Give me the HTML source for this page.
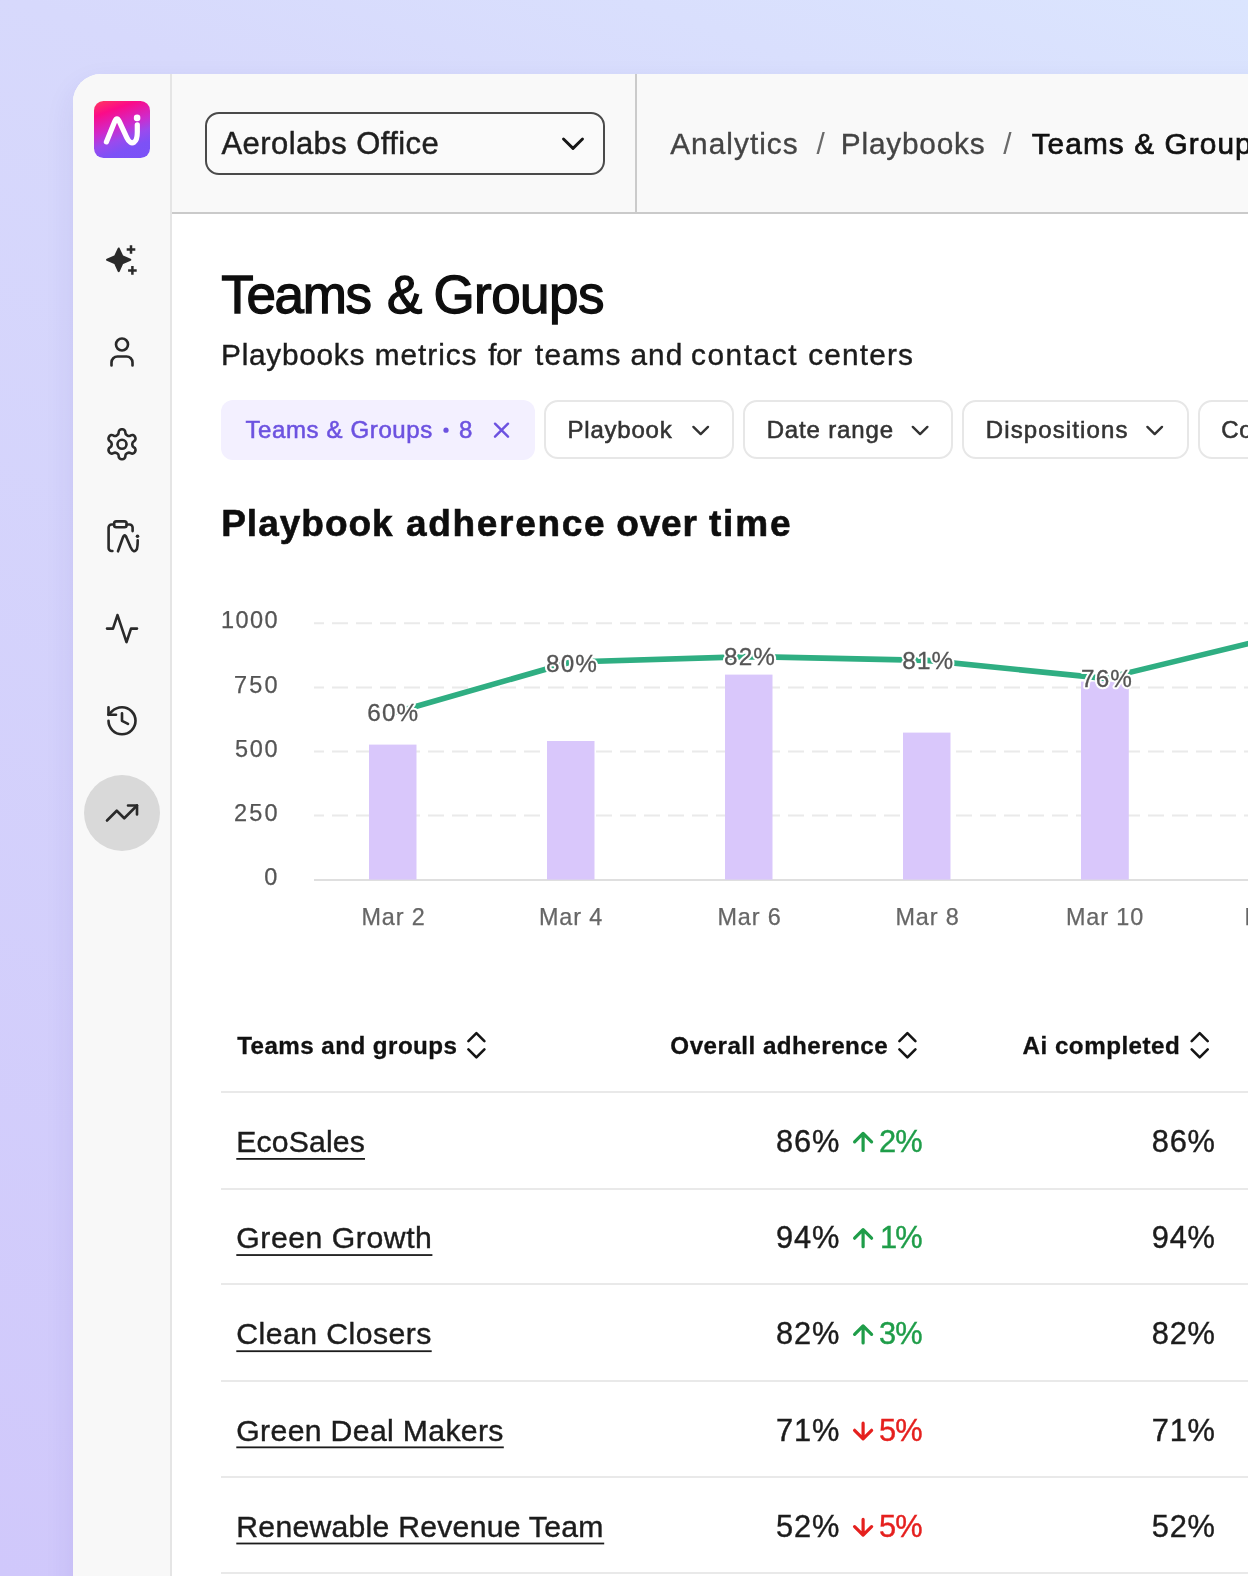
<!DOCTYPE html>
<html lang="en">
<head>
<meta charset="utf-8">
<title>Teams &amp; Groups</title>
<style>
html,body{margin:0;padding:0}
body{width:1248px;height:1576px;overflow:hidden;position:relative;font-family:"Liberation Sans",sans-serif;
  background:linear-gradient(200deg,#dbe5fe 0%,#d7d9fc 22%,#d0c8fb 100%);}
#root{position:absolute;left:0;top:0;width:1248px;height:1576px;overflow:hidden}
.abs{position:absolute}
#win{left:73px;top:74px;width:1300px;height:1600px;background:#fff;border-top-left-radius:28px;box-shadow:0 12px 30px rgba(60,40,160,.09)}
#side{left:73px;top:74px;width:97px;height:1600px;background:#f8f8f8;border-top-left-radius:28px;border-right:2px solid #e5e5e5}
#head{left:172px;top:74px;width:1200px;height:138px;background:#f9f9f9;border-bottom:2px solid #cacaca}
#vdiv{left:635px;top:74px;width:2px;height:138px;background:#cbcbcb}
#logo{left:94px;top:101px;width:56px;height:57px;border-radius:9.5px;background:linear-gradient(160deg,#ff3a5e 0%,#fb0b88 20%,#cf2acb 45%,#9a4aee 62%,#7d51f6 78%,#7a52f7 100%)}
#dd{left:205px;top:112px;width:396px;height:59px;border:2px solid #4a4a4a;border-radius:14px;background:#fafafa}
.t{position:absolute;white-space:nowrap;display:block}
.lnk{text-decoration:underline;text-decoration-thickness:2px;text-underline-offset:5px;text-decoration-skip-ink:none}
.chip{position:absolute;box-sizing:border-box;top:400px;height:59px;border:2px solid #e7e7e7;border-radius:14px;background:#fff}
#chip0{left:221px;top:400px;width:314px;height:60px;border-radius:12px;background:#f3f0ff}
.hr{position:absolute;left:221px;width:1100px;height:2px;background:#e9e9e9}
#act{left:84px;top:775px;width:76px;height:76px;border-radius:50%;background:#d9d9d9}
svg{position:absolute;left:0;top:0;overflow:visible}
</style>
</head>
<body>
<div id="root">
<div id="win" class="abs"></div>
<div id="side" class="abs"></div>
<div id="head" class="abs"></div>
<div id="vdiv" class="abs"></div>
<div id="logo" class="abs"></div>
<div id="dd" class="abs"></div>
<div id="act" class="abs"></div>
<div id="chip0" class="abs"></div>
<div class="chip" style="left:544px;width:190px"></div>
<div class="chip" style="left:743px;width:210px"></div>
<div class="chip" style="left:962px;width:227px"></div>
<div class="chip" style="left:1198px;width:200px"></div>
<div class="hr" style="top:1091px"></div>
<div class="hr" style="top:1188px"></div>
<div class="hr" style="top:1283px"></div>
<div class="hr" style="top:1380px"></div>
<div class="hr" style="top:1476px"></div>
<div class="hr" style="top:1572px"></div>

<!-- chart -->
<svg width="1248" height="1576" viewBox="0 0 1248 1576" style="will-change:transform">
  <g stroke="#eaeaea" stroke-width="2" stroke-dasharray="16 8" stroke-dashoffset="6" fill="none">
    <path d="M314 623.3H1248"/><path d="M314 687.4H1248"/><path d="M314 751.5H1248"/><path d="M314 815.6H1248"/>
  </g>
  <path d="M314 880H1248" stroke="#dfdfdf" stroke-width="2"/>
  <g fill="#d9c7fb">
    <rect x="369" y="744.6" width="47.5" height="135"/>
    <rect x="547" y="741" width="47.5" height="138.6"/>
    <rect x="725" y="674.6" width="47.5" height="205"/>
    <rect x="903" y="732.6" width="47.5" height="147"/>
    <rect x="1081" y="681.6" width="47.8" height="198"/>
  </g>
  <polyline points="393,713 571,662 749,656.6 927,660.4 1105,678.4 1283,635.3" fill="none" stroke="#2fae82" stroke-width="5.6" stroke-linejoin="round" stroke-linecap="round"/>
  <g font-family="Liberation Sans, sans-serif" font-size="24.3" text-anchor="middle" letter-spacing="1.1">
  <g fill="#fff" stroke="#fff" stroke-width="4.3" stroke-linejoin="round">
    <text x="393.3" y="720.6">60%</text>
    <text x="572" y="672.3">80%</text>
    <text x="750" y="664.8">82%</text>
    <text x="928.3" y="668.7">81%</text>
    <text x="1107" y="686.5">76%</text>
  </g>
  <g fill="#555" stroke="#555" stroke-width="0.3">
    <text x="393.3" y="720.6">60%</text>
    <text x="572" y="672.3">80%</text>
    <text x="750" y="664.8">82%</text>
    <text x="928.3" y="668.7">81%</text>
    <text x="1107" y="686.5">76%</text>
  </g>
  </g>
</svg>

<!-- icons -->
<svg width="1248" height="1576" viewBox="0 0 1248 1576" fill="none" stroke="#2a2a2a" stroke-width="1.75" stroke-linecap="round" stroke-linejoin="round">
  <!-- logo glyph -->
  <g stroke="#fff" stroke-width="5.2">
    <path d="M106.4 141.9 L114.7 121.6 Q116.9 116 119.4 121.6 L126.8 137.6 Q130.2 144.8 134.3 142 Q137.3 139.8 137.3 132 L137.3 124.8" />
  </g>
  <circle cx="137.1" cy="117.9" r="3.3" fill="#fff" stroke="none"/>
  <!-- dropdown chevron -->
  <path d="M563.5 139 L573 148.4 L582.5 139" stroke="#161616" stroke-width="2.9"/>
  <!-- sparkles -->
  <g fill="#2a2a2a" stroke="#2a2a2a" stroke-width="2.2" stroke-linejoin="round">
    <path d="M118.7 248.6 L122.2 256.3 L130.2 259.8 L122.2 263.3 L118.7 271.0 L115.2 263.3 L107.2 259.8 L115.2 256.3Z"/>
  </g>
  <g stroke-width="2.5" stroke-linecap="butt">
    <path d="M131 245.2v8.6M126.7 249.5h8.6"/>
    <path d="M132.4 266.1v8.6M128.1 270.4h8.6"/>
  </g>
  <!-- user -->
  <g transform="translate(104 334) scale(1.5)"><path d="M19 21v-2a4 4 0 0 0-4-4H9a4 4 0 0 0-4 4v2"/><circle cx="12" cy="7" r="4"/></g>
  <!-- settings -->
  <g transform="translate(104 426.3) scale(1.5)"><path d="M12.22 2h-.44a2 2 0 0 0-2 2v.18a2 2 0 0 1-1 1.73l-.43.25a2 2 0 0 1-2 0l-.15-.08a2 2 0 0 0-2.73.73l-.22.38a2 2 0 0 0 .73 2.73l.15.1a2 2 0 0 1 1 1.72v.51a2 2 0 0 1-1 1.74l-.15.09a2 2 0 0 0-.73 2.73l.22.38a2 2 0 0 0 2.73.73l.15-.08a2 2 0 0 1 2 0l.43.25a2 2 0 0 1 1 1.73V20a2 2 0 0 0 2 2h.44a2 2 0 0 0 2-2v-.18a2 2 0 0 1 1-1.73l.43-.25a2 2 0 0 1 2 0l.15.08a2 2 0 0 0 2.73-.73l.22-.39a2 2 0 0 0-.73-2.73l-.15-.08a2 2 0 0 1-1-1.74v-.5a2 2 0 0 1 1-1.74l.15-.09a2 2 0 0 0 .73-2.73l-.22-.38a2 2 0 0 0-2.73-.73l-.15.08a2 2 0 0 1-2 0l-.43-.25a2 2 0 0 1-1-1.73V4a2 2 0 0 0-2-2z"/><circle cx="12" cy="12" r="3"/></g>
  <!-- clipboard ai -->
  <g stroke-width="2.6">
    <rect x="114.1" y="521.4" width="12.5" height="5.8" rx="2.2"/>
    <path d="M114 524.5h-2.4a3 3 0 0 0-3 3v20.5a3 3 0 0 0 3 3h.8"/>
    <path d="M126.7 524.5h2.9a3 3 0 0 1 3 3v3.6"/>
    <path d="M118 551.3 L122.6 538.3 Q124.7 532.5 126.8 538.3 L130.6 547.3 Q133.6 553.8 136.6 549.5 Q137.7 547.5 137.7 540.3"/>
  </g>
  <circle cx="137.5" cy="536.2" r="1.8" fill="#2a2a2a" stroke="none"/>
  <!-- activity -->
  <g transform="translate(104 610.6) scale(1.5)"><polyline points="22 12 18 12 15 21 9 3 6 12 2 12"/></g>
  <!-- history -->
  <g transform="translate(104 702.8) scale(1.5)"><path d="M3 12a9 9 0 1 0 9-9 9.75 9.75 0 0 0-6.74 2.74L3 8"/><path d="M3 3v5h5"/><path d="M12 7v5l4 2"/></g>
  <!-- trending -->
  <g transform="translate(104 795) scale(1.5)"><polyline points="22 7 13.5 15.5 8.5 10.5 2 17"/><polyline points="16 7 22 7 22 13"/></g>

  <!-- chip icons -->
  <g stroke="#6c52e0" stroke-width="2.4"><path d="M495 423.7l13 13M508 423.7l-13 13"/></g>
  <circle cx="446" cy="430.2" r="2.6" fill="#6c52e0" stroke="none"/>
  <g stroke="#333" stroke-width="2.4">
    <path d="M693.4 426.9l7.3 7.2 7.3-7.2"/>
    <path d="M912.8 426.9l7.3 7.2 7.3-7.2"/>
    <path d="M1147.4 426.9l7.3 7.2 7.3-7.2"/>
  </g>
  <!-- sort icons -->
  <g stroke="#151515" stroke-width="2.6">
    <path d="M468.4 1041.2L476.4 1033.2L484.4 1041.2M468.4 1049.3L476.4 1057.3L484.4 1049.3"/>
    <path d="M899.4 1041.2L907.4 1033.2L915.4 1041.2M899.4 1049.3L907.4 1057.3L915.4 1049.3"/>
    <path d="M1191.7 1041.2L1199.7 1033.2L1207.7 1041.2M1191.7 1049.3L1199.7 1057.3L1207.7 1049.3"/>
  </g>
  <!-- arrows -->
  <g stroke-width="3.2">
    <rect x="236.3" y="1158.00" width="128.7" height="1.8" fill="#1c1c1c" stroke="none"/>
    <path stroke="#1f9d49" d="M863.1 1150.4V1133.4M854.6 1141.9L863.1 1133.4L871.6 1141.9"/>
    <rect x="236.3" y="1254.15" width="196.1" height="1.8" fill="#1c1c1c" stroke="none"/>
    <path stroke="#1f9d49" d="M863.1 1246.7V1229.7M854.6 1238.2L863.1 1229.7L871.6 1238.2"/>
    <rect x="236.3" y="1350.30" width="195.4" height="1.8" fill="#1c1c1c" stroke="none"/>
    <path stroke="#1f9d49" d="M863.1 1342.9V1325.9M854.6 1334.4L863.1 1325.9L871.6 1334.4"/>
    <rect x="236.3" y="1446.45" width="267.5" height="1.8" fill="#1c1c1c" stroke="none"/>
    <path stroke="#e5201e" d="M863.1 1423.2V1438.8M854.6 1430.3L863.1 1438.8L871.6 1430.3"/>
    <rect x="236.3" y="1542.60" width="367.9" height="1.8" fill="#1c1c1c" stroke="none"/>
    <path stroke="#e5201e" d="M863.1 1519.4V1535.1M854.6 1526.6L863.1 1535.1L871.6 1526.6"/>
  </g>
</svg>

<div id="txt" style="position:absolute;left:0;top:0;width:1248px;height:1576px;will-change:transform">
<span class="t" style="left:221.53px;top:128px;font-size:31px;line-height:31px;color:#1f1f1f;letter-spacing:0.416px;-webkit-text-stroke:0.45px #1f1f1f">Aerolabs Office</span>
<span class="t" style="left:670.17px;top:129px;font-size:29.8px;line-height:29.8px;color:#444;letter-spacing:1.040px;-webkit-text-stroke:0.35px #444">Analytics</span>
<span class="t" style="left:816.50px;top:129px;font-size:29.8px;line-height:29.8px;color:#6a6a6a;letter-spacing:0.000px">/</span>
<span class="t" style="left:840.77px;top:129px;font-size:29.8px;line-height:29.8px;color:#444;letter-spacing:0.809px;-webkit-text-stroke:0.35px #444">Playbooks</span>
<span class="t" style="left:1003.30px;top:129px;font-size:29.8px;line-height:29.8px;color:#6a6a6a;letter-spacing:0.000px">/</span>
<span class="t" style="left:1031.65px;top:129px;font-size:29.8px;line-height:29.8px;color:#111;letter-spacing:1.085px;-webkit-text-stroke:0.7px #111">Teams &amp; Groups</span>
<span class="t" style="left:221.35px;top:268px;font-size:53px;line-height:53px;color:#0e0e0e;letter-spacing:-1.350px;-webkit-text-stroke:1.3px #0e0e0e">Teams</span>
<span class="t" style="left:386.95px;top:268px;font-size:53px;line-height:53px;color:#0e0e0e;letter-spacing:0.000px;-webkit-text-stroke:1.3px #0e0e0e">&amp;</span>
<span class="t" style="left:433.45px;top:268px;font-size:53px;line-height:53px;color:#0e0e0e;letter-spacing:-0.561px;-webkit-text-stroke:1.3px #0e0e0e">Groups</span>
<span class="t" style="left:221.10px;top:340px;font-size:29.8px;line-height:29.8px;color:#1c1c1c;letter-spacing:0.715px;-webkit-text-stroke:0.4px #1c1c1c">Playbooks</span>
<span class="t" style="left:374.80px;top:340px;font-size:29.8px;line-height:29.8px;color:#1c1c1c;letter-spacing:0.948px;-webkit-text-stroke:0.4px #1c1c1c">metrics</span>
<span class="t" style="left:488.20px;top:340px;font-size:29.8px;line-height:29.8px;color:#1c1c1c;letter-spacing:-0.475px;-webkit-text-stroke:0.4px #1c1c1c">for</span>
<span class="t" style="left:535.10px;top:340px;font-size:29.8px;line-height:29.8px;color:#1c1c1c;letter-spacing:1.039px;-webkit-text-stroke:0.4px #1c1c1c">teams</span>
<span class="t" style="left:630.40px;top:340px;font-size:29.8px;line-height:29.8px;color:#1c1c1c;letter-spacing:1.128px;-webkit-text-stroke:0.4px #1c1c1c">and</span>
<span class="t" style="left:691.00px;top:340px;font-size:29.8px;line-height:29.8px;color:#1c1c1c;letter-spacing:1.568px;-webkit-text-stroke:0.4px #1c1c1c">contact</span>
<span class="t" style="left:808.20px;top:340px;font-size:29.8px;line-height:29.8px;color:#1c1c1c;letter-spacing:1.181px;-webkit-text-stroke:0.4px #1c1c1c">centers</span>
<span class="t" style="left:245.38px;top:418px;font-size:24px;line-height:24px;color:#6c52e0;letter-spacing:0.632px;-webkit-text-stroke:0.55px #6c52e0">Teams &amp; Groups</span>
<span class="t" style="left:459.07px;top:418px;font-size:24px;line-height:24px;color:#6c52e0;letter-spacing:0.000px;-webkit-text-stroke:0.55px #6c52e0">8</span>
<span class="t" style="left:567.57px;top:418px;font-size:24px;line-height:24px;color:#333;letter-spacing:0.774px;-webkit-text-stroke:0.55px #333">Playbook</span>
<span class="t" style="left:766.67px;top:418px;font-size:24px;line-height:24px;color:#333;letter-spacing:0.850px;-webkit-text-stroke:0.55px #333">Date range</span>
<span class="t" style="left:985.77px;top:418px;font-size:24px;line-height:24px;color:#333;letter-spacing:1.115px;-webkit-text-stroke:0.55px #333">Dispositions</span>
<span class="t" style="left:1221.28px;top:418px;font-size:24px;line-height:24px;color:#333;letter-spacing:0.534px;-webkit-text-stroke:0.55px #333">Contacts</span>
<span class="t" style="left:221.20px;top:505px;font-size:37px;line-height:37px;color:#0e0e0e;letter-spacing:0.998px;font-weight:700;-webkit-text-stroke:0.6px #0e0e0e">Playbook</span>
<span class="t" style="left:405.90px;top:505px;font-size:37px;line-height:37px;color:#0e0e0e;letter-spacing:1.698px;font-weight:700;-webkit-text-stroke:0.6px #0e0e0e">adherence</span>
<span class="t" style="left:616.20px;top:505px;font-size:37px;line-height:37px;color:#0e0e0e;letter-spacing:0.848px;font-weight:700;-webkit-text-stroke:0.6px #0e0e0e">over</span>
<span class="t" style="left:708.90px;top:505px;font-size:37px;line-height:37px;color:#0e0e0e;letter-spacing:1.833px;font-weight:700;-webkit-text-stroke:0.6px #0e0e0e">time</span>
<span class="t" style="left:220.93px;top:609px;font-size:23.5px;line-height:23.5px;color:#555;letter-spacing:1.480px;-webkit-text-stroke:0.25px #555">1000</span>
<span class="t" style="left:234.03px;top:674px;font-size:23.5px;line-height:23.5px;color:#555;letter-spacing:2.205px;-webkit-text-stroke:0.25px #555">750</span>
<span class="t" style="left:235.03px;top:738px;font-size:23.5px;line-height:23.5px;color:#555;letter-spacing:1.705px;-webkit-text-stroke:0.25px #555">500</span>
<span class="t" style="left:234.03px;top:802px;font-size:23.5px;line-height:23.5px;color:#555;letter-spacing:2.205px;-webkit-text-stroke:0.25px #555">250</span>
<span class="t" style="left:264.23px;top:866px;font-size:23.5px;line-height:23.5px;color:#555;letter-spacing:0.000px;-webkit-text-stroke:0.25px #555">0</span>
<span class="t" style="left:361.41px;top:906px;font-size:23.4px;line-height:23.4px;color:#666;letter-spacing:0.900px;-webkit-text-stroke:0.25px #666">Mar 2</span>
<span class="t" style="left:538.91px;top:906px;font-size:23.4px;line-height:23.4px;color:#666;letter-spacing:0.900px;-webkit-text-stroke:0.25px #666">Mar 4</span>
<span class="t" style="left:717.41px;top:906px;font-size:23.4px;line-height:23.4px;color:#666;letter-spacing:0.900px;-webkit-text-stroke:0.25px #666">Mar 6</span>
<span class="t" style="left:895.41px;top:906px;font-size:23.4px;line-height:23.4px;color:#666;letter-spacing:0.900px;-webkit-text-stroke:0.25px #666">Mar 8</span>
<span class="t" style="left:1065.95px;top:906px;font-size:23.4px;line-height:23.4px;color:#666;letter-spacing:0.900px;-webkit-text-stroke:0.25px #666">Mar 10</span>
<span class="t" style="left:1244.62px;top:906px;font-size:23.4px;line-height:23.4px;color:#666;letter-spacing:0.900px;-webkit-text-stroke:0.25px #666">Mar 12</span>
<span class="t" style="left:237.15px;top:1034px;font-size:24.2px;line-height:24.2px;color:#111;letter-spacing:0.440px;font-weight:700;-webkit-text-stroke:0.3px #111">Teams and groups</span>
<span class="t" style="left:670.35px;top:1034px;font-size:24.2px;line-height:24.2px;color:#111;letter-spacing:0.476px;font-weight:700;-webkit-text-stroke:0.3px #111">Overall adherence</span>
<span class="t" style="left:1022.55px;top:1034px;font-size:24.2px;line-height:24.2px;color:#111;letter-spacing:0.491px;font-weight:700;-webkit-text-stroke:0.3px #111">Ai completed</span>
<span class="t" style="left:236.30px;top:1127px;font-size:30.2px;line-height:30.2px;color:#1c1c1c;letter-spacing:0.146px;-webkit-text-stroke:0.4px #1c1c1c">EcoSales</span>
<span class="t" style="left:776.00px;top:1127px;font-size:30.8px;line-height:30.8px;color:#1c1c1c;letter-spacing:0.922px;-webkit-text-stroke:0.4px #1c1c1c">86%</span>
<span class="t" style="left:878.90px;top:1127px;font-size:30.8px;line-height:30.8px;color:#1f9d49;letter-spacing:-0.828px;-webkit-text-stroke:0.4px #1f9d49">2%</span>
<span class="t" style="left:1151.80px;top:1127px;font-size:30.8px;line-height:30.8px;color:#1c1c1c;letter-spacing:0.772px;-webkit-text-stroke:0.4px #1c1c1c">86%</span>
<span class="t" style="left:236.30px;top:1223px;font-size:30.2px;line-height:30.2px;color:#1c1c1c;letter-spacing:0.543px;-webkit-text-stroke:0.4px #1c1c1c">Green Growth</span>
<span class="t" style="left:776.00px;top:1223px;font-size:30.8px;line-height:30.8px;color:#1c1c1c;letter-spacing:0.922px;-webkit-text-stroke:0.4px #1c1c1c">94%</span>
<span class="t" style="left:880.10px;top:1223px;font-size:30.8px;line-height:30.8px;color:#1f9d49;letter-spacing:-2.028px;-webkit-text-stroke:0.4px #1f9d49">1%</span>
<span class="t" style="left:1151.80px;top:1223px;font-size:30.8px;line-height:30.8px;color:#1c1c1c;letter-spacing:0.772px;-webkit-text-stroke:0.4px #1c1c1c">94%</span>
<span class="t" style="left:236.30px;top:1319px;font-size:30.2px;line-height:30.2px;color:#1c1c1c;letter-spacing:0.447px;-webkit-text-stroke:0.4px #1c1c1c">Clean Closers</span>
<span class="t" style="left:776.00px;top:1319px;font-size:30.8px;line-height:30.8px;color:#1c1c1c;letter-spacing:0.922px;-webkit-text-stroke:0.4px #1c1c1c">82%</span>
<span class="t" style="left:878.90px;top:1319px;font-size:30.8px;line-height:30.8px;color:#1f9d49;letter-spacing:-0.828px;-webkit-text-stroke:0.4px #1f9d49">3%</span>
<span class="t" style="left:1151.80px;top:1319px;font-size:30.8px;line-height:30.8px;color:#1c1c1c;letter-spacing:0.772px;-webkit-text-stroke:0.4px #1c1c1c">82%</span>
<span class="t" style="left:236.30px;top:1416px;font-size:30.2px;line-height:30.2px;color:#1c1c1c;letter-spacing:0.340px;-webkit-text-stroke:0.4px #1c1c1c">Green Deal Makers</span>
<span class="t" style="left:776.00px;top:1416px;font-size:30.8px;line-height:30.8px;color:#1c1c1c;letter-spacing:0.922px;-webkit-text-stroke:0.4px #1c1c1c">71%</span>
<span class="t" style="left:878.90px;top:1416px;font-size:30.8px;line-height:30.8px;color:#e5201e;letter-spacing:-0.828px;-webkit-text-stroke:0.4px #e5201e">5%</span>
<span class="t" style="left:1151.80px;top:1416px;font-size:30.8px;line-height:30.8px;color:#1c1c1c;letter-spacing:0.772px;-webkit-text-stroke:0.4px #1c1c1c">71%</span>
<span class="t" style="left:236.30px;top:1512px;font-size:30.2px;line-height:30.2px;color:#1c1c1c;letter-spacing:0.247px;-webkit-text-stroke:0.4px #1c1c1c">Renewable Revenue Team</span>
<span class="t" style="left:776.00px;top:1512px;font-size:30.8px;line-height:30.8px;color:#1c1c1c;letter-spacing:0.922px;-webkit-text-stroke:0.4px #1c1c1c">52%</span>
<span class="t" style="left:878.90px;top:1512px;font-size:30.8px;line-height:30.8px;color:#e5201e;letter-spacing:-0.828px;-webkit-text-stroke:0.4px #e5201e">5%</span>
<span class="t" style="left:1151.80px;top:1512px;font-size:30.8px;line-height:30.8px;color:#1c1c1c;letter-spacing:0.772px;-webkit-text-stroke:0.4px #1c1c1c">52%</span>
</div>
</div>
</body>
</html>
